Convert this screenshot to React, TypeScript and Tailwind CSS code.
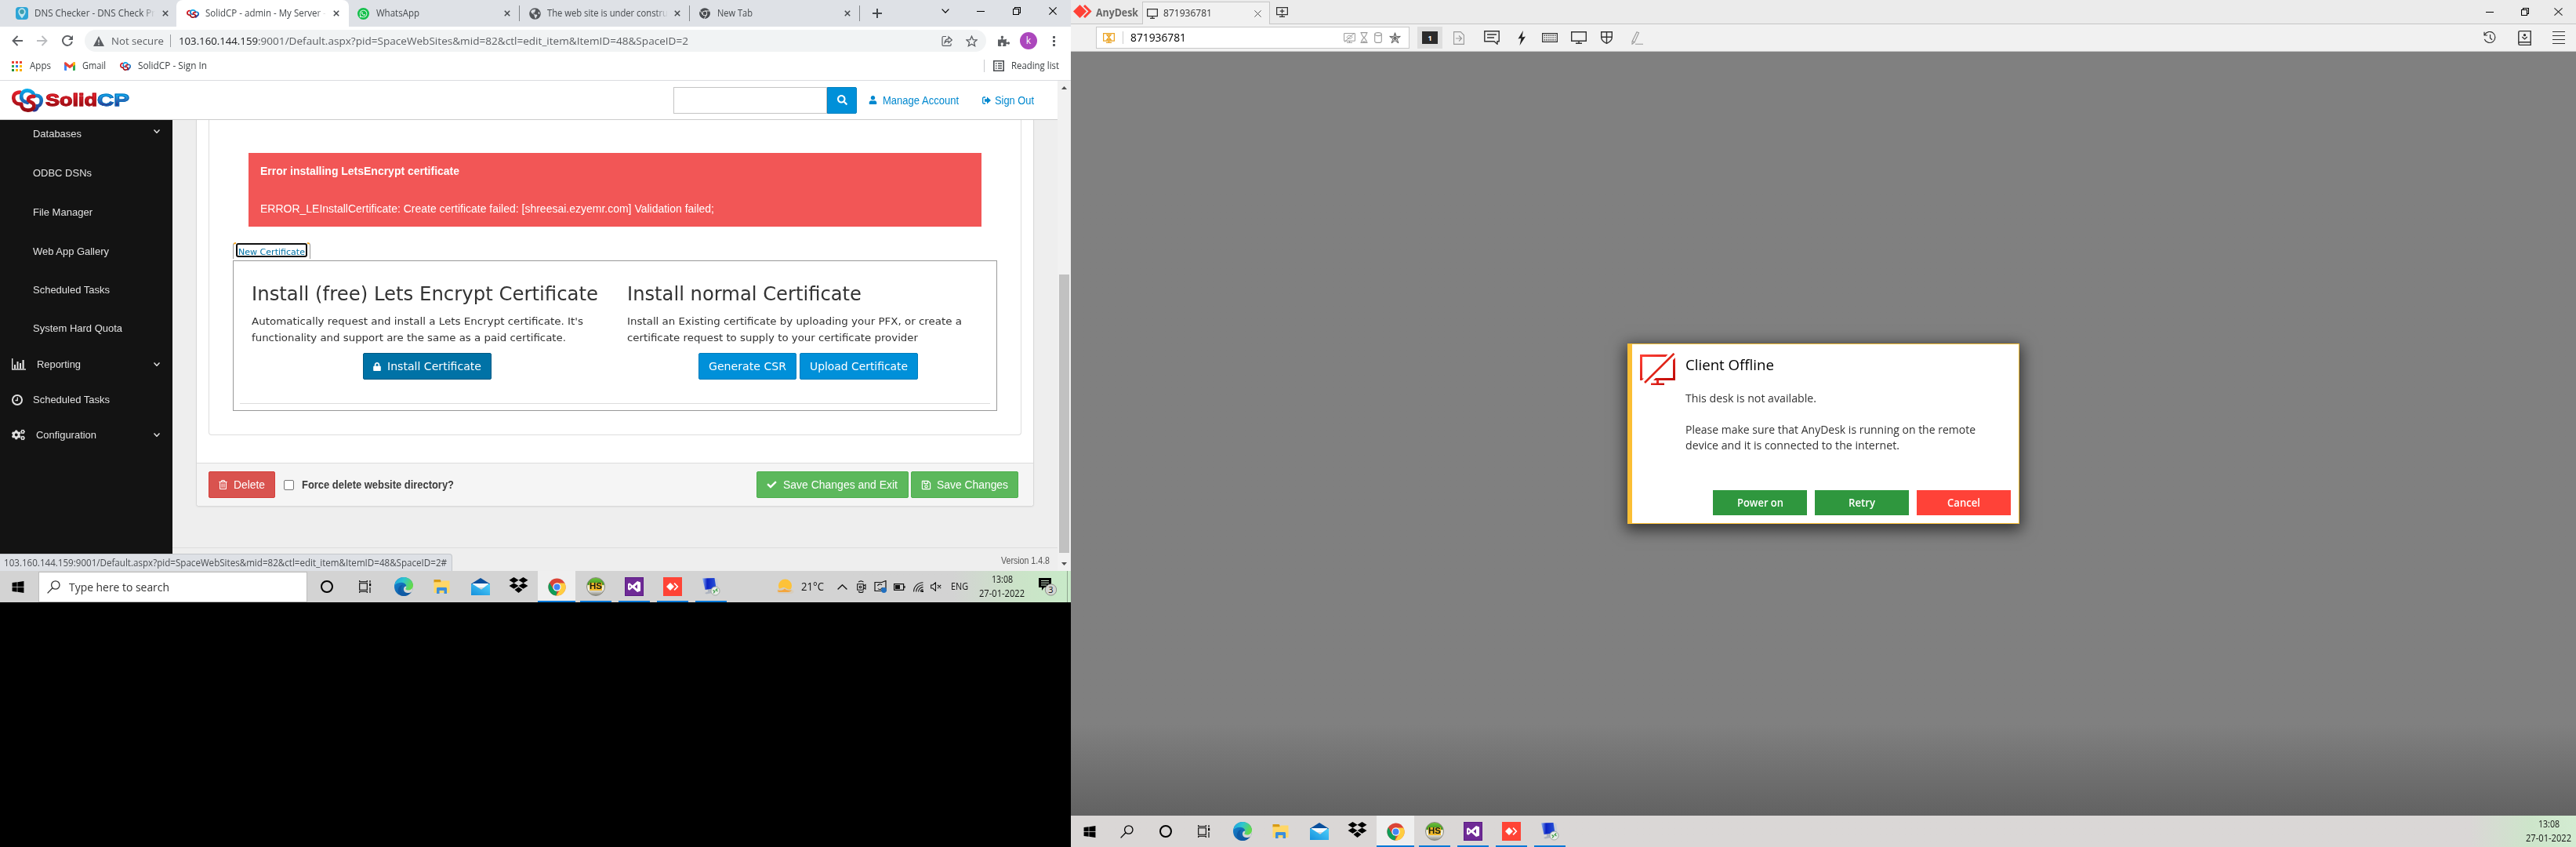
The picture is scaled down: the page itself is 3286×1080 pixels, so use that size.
import React, { useLayoutEffect, useRef, useState } from "react";
import {
  FaSearch,
  FaUser,
  FaLock,
  FaCheck,
  FaRegSave,
  FaCogs,
  FaRegTrashAlt,
  FaWhatsapp,
  FaGlobeAmericas,
  FaDropbox,
  FaWindows,
  FaPuzzlePiece,
} from "react-icons/fa";

const UI = "font-['Open_Sans','Noto_Sans',sans-serif]";
const ARIAL = "font-['Liberation_Sans',Arial,sans-serif]";
const VERDANA = "font-['DejaVu_Sans',Verdana,sans-serif]";

/* One line of text condensed or widened to fill the width of its box. */
function Fit({ className = "", inner = "", children }: { className?: string; inner?: string; children: React.ReactNode }) {
  const box = useRef<HTMLSpanElement>(null);
  const text = useRef<HTMLSpanElement>(null);
  const [k, setK] = useState(1);
  useLayoutEffect(() => {
    if (box.current && text.current && text.current.offsetWidth > 0) {
      setK(box.current.clientWidth / text.current.getBoundingClientRect().width);
    }
  }, []);
  return (
    <span ref={box} className={`block shrink-0 text-left whitespace-nowrap ${className}`}>
      <span ref={text} className={`inline-block origin-left ${inner}`} style={{ transform: `scaleX(${k})` }}>
        {children}
      </span>
    </span>
  );
}

type IconProps = { className: string; vb: string; children: React.ReactNode; sw?: number };
function Line({ className, vb, children, sw = 1.3 }: IconProps) {
  return (
    <svg className={`block shrink-0 ${className}`} viewBox={vb} fill="none" stroke="currentColor" strokeWidth={sw} preserveAspectRatio="none">
      {children}
    </svg>
  );
}

function Cross({ className }: { className: string }) {
  return (
    <Line className={className} vb="0 0 10 10" sw={1.9}>
      <path d="M1 1l8 8M9 1l-8 8" />
    </Line>
  );
}
function ThinCross({ className }: { className: string }) {
  return (
    <Line className={className} vb="0 0 10 10" sw={1.1}>
      <path d="M.4.4l9.2 9.2M9.6.4L.4 9.6" />
    </Line>
  );
}
function Restore({ className }: { className: string }) {
  return (
    <Line className={className} vb="0 0 10 10" sw={1.1}>
      <path d="M.5 2.500h7v7h-7zM2.500 2.500v-2h7v7h-2" />
    </Line>
  );
}
function Down({ className, sw = 1.2 }: { className: string; sw?: number }) {
  return (
    <Line className={className} vb="0 0 10 6" sw={sw}>
      <path d="M.6.6L5 5.2 9.4.6" />
    </Line>
  );
}

function Knot({ className }: { className: string }) {
  return (
    <svg className={`block shrink-0 ${className}`} viewBox="0 0 40 30" preserveAspectRatio="none" fill="none" strokeWidth="4.6" strokeLinecap="round">
      <defs>
        <linearGradient id="kr" gradientUnits="userSpaceOnUse" x1="0" y1="0" x2="0" y2="30">
          <stop offset="0" stopColor="#ee2430" />
          <stop offset="1" stopColor="#8f0a10" />
        </linearGradient>
        <linearGradient id="kb" gradientUnits="userSpaceOnUse" x1="0" y1="0" x2="0" y2="30">
          <stop offset="0" stopColor="#08b0f0" />
          <stop offset="1" stopColor="#2b2a86" />
        </linearGradient>
      </defs>
      <path stroke="url(#kr)" d="M10.500 4.600C3.500 4.600 2 9 2.300 12.500 2.600 17 6.500 20 10 19.500" />
      <path stroke="url(#kb)" d="M30 9C36 8 38 12.500 37.700 16c-.2 4-2.800 6-5 6.200.2 3-2.300 5.300-4.300 5" />
      <path stroke="url(#kb)" d="M12.500 12.500C11 7 14.500 2.400 20 2.400c5 0 8.500 3.500 8.300 7.600" />
      <path stroke="url(#kb)" d="M12.500 12.500c.8 3.500 4.500 4.500 7.500 5.300" />
      <path stroke="url(#kr)" d="M28.300 10c-4-.6-7.300 1-7.300 4 0 3 5.500 3 7 6 1.700 4-2 7.600-7.500 7.600-6 0-8.500-4-8.300-8.100" />
    </svg>
  );
}

function ChromeIcon({ className, mono = false }: { className: string; mono?: boolean }) {
  const c = mono ? ["#4a4d51", "#4a4d51", "#4a4d51", "#4a4d51"] : ["#db4437", "#0f9d58", "#ffcd40", "#4285f4"];
  return (
    <svg className={`block shrink-0 ${className}`} viewBox="0 0 48 48">
      <circle cx="24" cy="24" r="23" fill={c[0]} />
      <path fill={c[1]} d="M4.100 12.500L14 29.800 24 34l-2 13A23 23 0 0 1 4.100 12.500z" />
      <path fill={c[2]} d="M24 13.500h20.500A23 23 0 0 1 22 47l11-18z" />
      {mono && <path d="M24 13.500h20.500M33 29L22 47M14 29L4 12" stroke="#fff" strokeWidth="3" />}
      <circle cx="24" cy="24" r="10.800" fill="#fff" />
      <circle cx="24" cy="24" r="8.400" fill={c[3]} />
    </svg>
  );
}

function EdgeIcon() {
  return (
    <svg className="block h-6 w-6" viewBox="0 0 24 24">
      <defs>
        <linearGradient id="e1" x1="0" y1="0" x2="1" y2=".4">
          <stop offset="0" stopColor="#1b9de2" />
          <stop offset=".5" stopColor="#2fc6cf" />
          <stop offset="1" stopColor="#62d94e" />
        </linearGradient>
        <linearGradient id="e2" x1="0" y1="0" x2="1" y2="1">
          <stop offset="0" stopColor="#1588d8" />
          <stop offset="1" stopColor="#114a8b" />
        </linearGradient>
      </defs>
      <circle cx="12" cy="12" r="12" fill="url(#e2)" />
      <path fill="#d6d6d6" d="M24 10.500c.3 2.500-.2 5.500-1.500 7.700-2 1.800-4.300 2-6 1.800-3.500-.5-5-3-4.500-5.500.3-1.800 1.500-3 3-3z" />
      <path fill="url(#e1)" d="M.2 10.500C1 4.500 6 0 12 0c7.500 0 12 5.400 12 10.500 0 3.600-2.700 6-6 6-2.700 0-4-1-3.600-1.900.5-.9.900-1.500.900-2.700C15.300 9 12.500 6.800 8.800 6.800 4.500 6.800 1.300 8.600.2 10.500z" />
      <path fill="#0f5aa5" d="M8.700 15c0 4 3.700 6.500 7.500 6.200 1.800 0 3.300-.7 4.300-1.400C18.500 22.500 15.300 24 12 24c-4.700 0-7.500-4-7-8 .3-3.400 3-6.300 6-6.300-1.400 1-2.300 3-2.300 5.300z" />
    </svg>
  );
}
function FolderIcon() {
  return (
    <svg className="block h-[18px] w-[21px]" viewBox="0 0 21 18" preserveAspectRatio="none">
      <path fill="#d89b14" d="M.5 0h8l1 1.500V4H.5z" />
      <path fill="#ffd767" d="M.5 3.300h9L11 1.500h9.500V17H.5z" />
      <path fill="#3b8edb" d="M4 18v-6.500C4 10.500 4.700 10 5.500 10h10c.9 0 1.500.6 1.500 1.500V18h-3.500v-4h-6v4z" />
    </svg>
  );
}
function MailIcon() {
  return (
    <svg className="block h-[22px] w-6" viewBox="0 0 24 22" preserveAspectRatio="none">
      <defs>
        <linearGradient id="ml" x1="1" y1="0" x2="0" y2="1">
          <stop offset="0" stopColor="#4fd0fb" />
          <stop offset="1" stopColor="#1590dc" />
        </linearGradient>
      </defs>
      <path fill="#0a4f9c" d="M12 0l12 7.500V10H0V7.500z" />
      <path fill="#f4fafe" d="M2 7h20v5H2z" />
      <path fill="url(#ml)" d="M0 7.500l2 .3 11 7L22 7.800l2-.3V22H0z" />
    </svg>
  );
}
function HSIcon() {
  return (
    <span className="flex h-6 w-6 items-center justify-center rounded-full border border-[#8a8a80] bg-[linear-gradient(#6cc23a,#3f9420_38%,#e8e4c0_42%,#f4f4ee_66%,#8c8c84)]">
      <Fit className={`h-[10px] w-4 bg-[#f0b82a] text-[10px] leading-[10px] font-black text-[#141c10] ${ARIAL}`}>HS</Fit>
    </span>
  );
}
function VSIcon() {
  return (
    <span className="flex h-6 w-6 items-center justify-center border border-[#5b1b85] bg-[#6f2b96]">
      <svg className="block h-[14px] w-[16px]" viewBox="0 0 16 14">
        <path
          fill="#fff"
          fillRule="evenodd"
          d="M12 0l4 1.500v11L12 14 5.800 8.600 2 11.700 0 10.600V3.400L2 2.300l3.800 3.100zm0 4L8.500 7l3.500 3zM2 5v4l1.900-2z"
        />
      </svg>
    </span>
  );
}
function AnyDeskTile() {
  return (
    <span className="flex h-6 w-6 items-center justify-center bg-[#ff4436]">
      <svg className="block h-[10px] w-[16px]" viewBox="0 0 16 10">
        <path fill="#fff" d="M5 0l5 5-5 5-5-5z" />
        <path d="M10.100.7L14.300 5l-4.200 4.300" fill="none" stroke="#fff" strokeWidth="1.700" />
      </svg>
    </span>
  );
}
function RemoteIcon() {
  return (
    <svg className="block h-6 w-6" viewBox="0 0 24 24">
      <defs>
        <linearGradient id="rm" x1="0" y1="0" x2="1" y2="0">
          <stop offset="0" stopColor="#8fb6f4" />
          <stop offset=".35" stopColor="#0b22c4" />
          <stop offset="1" stopColor="#2a55d8" />
        </linearGradient>
      </defs>
      <path fill="#c9ced8" d="M16 1.500l4.500 1 1 12-5 1z" />
      <path fill="#aeb4c0" d="M8 14l5 0 1 4 2 1.500-10 2-2-1.500 4-1.500z" />
      <path fill="url(#rm)" d="M1 1.500l15.500-.5 2 13L4.500 16z" />
      <circle cx="17.500" cy="17.500" r="5.500" fill="#e8ece8" stroke="#8d968d" strokeWidth=".8" />
      <path d="M14.500 16.500l2.300 1.700-1.600 2.300M20.200 14.500l-2 2 2.400 1.500" fill="none" stroke="#3d9b45" strokeWidth="1.300" />
    </svg>
  );
}

function Magnifier() {
  return (
    <Line className="h-[17px] w-[17px]" vb="0 0 17 17" sw={1.3}>
      <circle cx="10.800" cy="6" r="5.200" />
      <path d="M7 9.800L.6 16.400" />
    </Line>
  );
}
function TaskView() {
  return (
    <Line className="h-4 w-4" vb="0 0 16 16" sw={1.1}>
      <path d="M.7 3.700h9.600v8.600H.7zM.7 0v1.800h9.600V0M.7 16v-1.800h9.600V16M14 0v3M14 9v7" />
      <path d="M13 4h2.200v3.200H13z" fill="currentColor" stroke="none" />
    </Line>
  );
}

function Cell({ children }: { children: React.ReactNode }) {
  return <div className="flex h-10 w-[49px] shrink-0 items-center justify-center">{children}</div>;
}
function RunCell({ children }: { children: React.ReactNode }) {
  return (
    <div className="flex h-10 w-[49px] shrink-0 flex-col items-center">
      <div className="flex h-[38px] items-center pt-0.5">{children}</div>
      <div className="h-0.5 w-10 bg-[#0078d7]" />
    </div>
  );
}

function TaskIcons() {
  return (
    <div className="flex text-black">
      <Cell>
        <span className="block h-4 w-4 rounded-full border-2 border-black" />
      </Cell>
      <Cell><TaskView /></Cell>
      <Cell><EdgeIcon /></Cell>
      <Cell><FolderIcon /></Cell>
      <Cell><MailIcon /></Cell>
      <Cell>
        <svg className="mb-1 block h-5 w-[25px]" viewBox="0 0 25 20" preserveAspectRatio="none">
          <path d="M6.500 0l6 3.700-6 3.700-6-3.700zM18.500 0l6 3.700-6 3.700-6-3.700zM6.500 7.400l6 3.700-6 3.700-6-3.700zM18.500 7.400l6 3.700-6 3.700-6-3.700zM12.500 12.500l5 3.500-5 4-5-4z" fill="#000" />
        </svg>
      </Cell>
      <div className="flex h-10 w-12 shrink-0 flex-col items-center bg-[#efefef]">
        <div className="flex h-[38px] items-center pt-0.5"><ChromeIcon className="h-[23px] w-[23px]" /></div>
        <div className="h-0.5 w-12 bg-[#0078d7]" />
      </div>
      <div className="w-px" />
      <RunCell><HSIcon /></RunCell>
      <RunCell><VSIcon /></RunCell>
      <RunCell><AnyDeskTile /></RunCell>
      <RunCell><RemoteIcon /></RunCell>
    </div>
  );
}

function Clock() {
  return (
    <div className={`flex w-[58px] shrink-0 flex-col items-center text-[12px] leading-[18px] text-[#111] ${UI}`}>
      <Fit className="w-[27px]">13:08</Fit>
      <Fit className="w-[58px]">27-01-2022</Fit>
    </div>
  );
}

function TabStrip() {
  return (
    <div className={`flex h-[34px] items-center bg-[#dee1e6] pl-5 text-[12px] leading-4 text-[#45494d] ${UI}`}>
      <span className="flex h-4 w-4 shrink-0 items-center justify-center rounded-sm bg-[#2ea5d6]">
        <svg className="h-[14px] w-3" viewBox="0 0 12 14">
          <path d="M6 13.500C3 9.500 1.300 7.500 1.300 5a4.700 4.700 0 0 1 9.400 0c0 2.500-1.700 4.500-4.700 8.500z" fill="#bfe6f0" />
          <circle cx="6" cy="5" r="2.900" fill="#3f9fae" />
        </svg>
      </span>
      <Fit className="ml-2 w-[154px] [mask-image:linear-gradient(to_right,black_90%,transparent)]">DNS Checker - DNS Check Pr</Fit>
      <Cross className="ml-[9px] h-2 w-2" />
      <div className="ml-[10px] flex h-[34px] w-[220px] shrink-0 items-center rounded-t-lg bg-white pl-[13px]">
        <Knot className="h-[11px] w-4" />
        <Fit className="ml-2 w-[154px] [mask-image:linear-gradient(to_right,black_92%,transparent)]">SolidCP - admin - My Server -</Fit>
        <Cross className="ml-[9px] h-2 w-2" />
      </div>
      <span className="ml-[11px] flex h-[15px] w-[15px] shrink-0 items-center justify-center rounded-full bg-[#14bf4b] text-white">
        <FaWhatsapp className="h-[11px] w-[11px]" />
      </span>
      <Fit className="ml-[9px] w-[55px]">WhatsApp</Fit>
      <Cross className="ml-[108px] h-2 w-2" />
      <span className="ml-[11px] h-5 w-px bg-[#808488]" />
      <FaGlobeAmericas className="ml-3 h-[15px] w-[15px] shrink-0 text-[#54575b]" />
      <Fit className="ml-2 w-[154px] [mask-image:linear-gradient(to_right,black_90%,transparent)]">The web site is under constru</Fit>
      <Cross className="ml-2 h-2 w-2" />
      <span className="ml-[11px] h-5 w-px bg-[#808488]" />
      <ChromeIcon mono className="ml-3 h-[14px] w-[14px]" />
      <Fit className="ml-[9px] w-[45px]">New Tab</Fit>
      <Cross className="ml-[117px] h-2 w-2" />
      <span className="ml-[11px] h-5 w-px bg-[#808488]" />
      <Line className="ml-4 h-3 w-3" vb="0 0 12 12" sw={2}>
        <path d="M6 0v12M0 6h12" />
      </Line>
      <div className="mb-[6px] ml-[76px] flex items-center text-black">
        <Down className="h-[6px] w-[10px]" />
        <span className="ml-[35px] h-px w-[10px] bg-black" />
        <Restore className="ml-9 h-[10px] w-[10px]" />
        <ThinCross className="ml-9 h-[10px] w-[10px]" />
      </div>
    </div>
  );
}

function AddressBar() {
  return (
    <div className={`flex h-9 items-center bg-white pl-[15px] text-[#5c5f63] ${UI}`}>
      <Line className="h-[14px] w-[14px]" vb="0 0 14 14" sw={1.8}>
        <path d="M14 7H1.500M7.500 1l-6 6 6 6" />
      </Line>
      <Line className="ml-[18px] h-[14px] w-[14px] text-[#b9bbbe]" vb="0 0 14 14" sw={1.8}>
        <path d="M0 7h12.500M6.500 1l6 6-6 6" />
      </Line>
      <Line className="ml-[18px] h-[14px] w-[14px]" vb="0 0 14 14" sw={1.9}>
        <path d="M11.800 3.300A6 6 0 1 0 12.900 8" />
        <path d="M14 0v6H8z" fill="currentColor" stroke="none" />
      </Line>
      <div className="ml-[15px] flex h-7 w-[1150px] shrink-0 items-center rounded-full bg-[#f1f3f4] pl-[11px] text-[13.5px] leading-5">
        <svg className="h-[13px] w-[14px] shrink-0" viewBox="0 0 14 13">
          <path d="M7 0l7 13H0z" fill="#5c5f63" />
          <path d="M7 4.500v4M7 9.700v1.500" stroke="#f1f3f4" strokeWidth="1.400" />
        </svg>
        <Fit className="ml-[9px] w-[67px]">Not secure</Fit>
        <span className="ml-2 h-4 w-px bg-[#9a9da1]" />
        <Fit className="ml-[10px] w-[101px] text-[#202124]">103.160.144.159</Fit>
        <Fit className="w-[549px]">:9001/Default.aspx?pid=SpaceWebSites&amp;mid=82&amp;ctl=edit_item&amp;ItemID=48&amp;SpaceID=2</Fit>
        <Line className="ml-[323px] h-[14px] w-[14px]" vb="0 0 14 14" sw={1.2}>
          <path d="M6 1.500H2.500C1.500 1.500 1 2 1 3v9c0 .8.500 1.300 1.300 1.300h8.500c.8 0 1.300-.5 1.300-1.300v-1.500" />
          <path d="M4 9.500C4.500 6 6.500 4.800 9 4.600V2l4.300 4L9 9.700V7.400C7 7.300 5.300 8 4 9.500z" />
        </Line>
        <Line className="ml-[17px] h-[15px] w-[15px]" vb="0 0 16 16" sw={1.4}>
          <path d="M8 1.300l2 4.600 5 .4-3.800 3.300 1.200 4.900L8 11.900l-4.400 2.600 1.200-4.900L1 6.300l5-.4z" />
        </Line>
      </div>
      <FaPuzzlePiece className="ml-[15px] h-[15px] w-[15px] shrink-0" />
      <span className="ml-[13px] flex h-[22px] w-[22px] shrink-0 items-center justify-center rounded-full bg-[#ab47bc] text-[12px] leading-none text-white">k</span>
      <svg className="ml-5 h-[13px] w-[3px] shrink-0" viewBox="0 0 3 13">
        <path d="M0 0h3v3H0zM0 5h3v3H0zM0 10h3v3H0z" fill="#5c5f63" />
      </svg>
    </div>
  );
}

function Bookmarks() {
  return (
    <div className={`flex h-[33px] items-center border-b border-[#dadce0] bg-white pb-1 pl-[15px] text-[12px] leading-4 text-[#3c4043] ${UI}`}>
      <div className="grid shrink-0 grid-cols-3 gap-x-[2px] gap-y-[2px]">
        {["bg-[#ea4335]", "bg-[#ea4335]", "bg-[#ea4335]", "bg-[#34a853]", "bg-[#2f7de9]", "bg-[#fbbc04]", "bg-[#1e8e3e]", "bg-[#fbbc04]", "bg-[#f9ab00]"].map((c, i) => (
          <span key={i} className={`h-[3px] w-[3px] ${c}`} />
        ))}
      </div>
      <Fit className="ml-[10px] w-[27px]">Apps</Fit>
      <svg className="ml-[17px] h-[11px] w-[14px] shrink-0" viewBox="0 0 14 11">
        <path fill="#4285f4" d="M0 1.500l3 2V11H1a1 1 0 0 1-1-1z" />
        <path fill="#34a853" d="M14 1.500l-3 2V11h2a1 1 0 0 0 1-1z" />
        <path fill="#ea4335" d="M0 1.500C0 .3 1.300-.3 2.300.5L7 4.200 11.700.5c1-.8 2.300-.2 2.300 1l-1 2.500-6 4.300L1 4z" />
        <path fill="#fbbc04" d="M11 1l.7-.5c1-.8 2.300-.2 2.300 1v2l-3 2z" />
      </svg>
      <Fit className="ml-[9px] w-[30px]">Gmail</Fit>
      <Knot className="ml-[18px] h-[11px] w-[14px]" />
      <Fit className="ml-[9px] w-[88px]">SolidCP - Sign In</Fit>
      <span className="ml-[991px] h-4 w-px bg-[#c8cacd]" />
      <Line className="ml-[11px] h-[14px] w-[14px] text-[#4a4d51]" vb="0 0 14 14" sw={1.6}>
        <path d="M.8.800h12.400v12.400H.8zM3 4h1.500M6 4h5M3 7h1.500M6 7h5M3 10h1.500M6 10h5" />
      </Line>
      <Fit className="ml-[9px] w-[61px]">Reading list</Fit>
    </div>
  );
}

function SiteHeader() {
  return (
    <header className={`flex h-[50px] items-center border-b border-[#ccc] bg-white pl-[15px] text-[14px] leading-5 text-[#0088cf] ${ARIAL}`}>
      <Knot className="h-[30px] w-10" />
      <Fit className="ml-[3px] w-[66px] text-[22px] leading-[24px] font-bold" inner="bg-linear-to-b from-[#ee2430] from-20% to-[#8f0a10] to-80% bg-clip-text text-transparent [-webkit-text-stroke:1px_#b3141c]">Solid</Fit>
      <Fit className="w-[41px] text-[22px] leading-[24px] font-bold" inner="bg-linear-to-b from-[#08b0f0] from-20% to-[#2b2a86] to-80% bg-clip-text text-transparent [-webkit-text-stroke:1px_#0a6fbd]">CP</Fit>
      <div className="ml-[694px] h-[34px] w-[196px] shrink-0 border border-[#c4c4c4] bg-white" />
      <div className="flex h-[34px] w-[38px] shrink-0 items-center justify-center rounded-r-[2px] border border-[#0080bf] bg-[#0090d9] text-white">
        <FaSearch className="h-[13px] w-[13px]" />
      </div>
      <FaUser className="ml-[15px] h-[11px] w-[11px] shrink-0" />
      <Fit className="ml-[7px] w-[97px]">Manage Account</Fit>
      <svg className="ml-[30px] h-[10px] w-[11px] shrink-0" viewBox="0 0 11 10">
        <path d="M4 1H2C1.200 1 .7 1.500.7 2.300v5.400C.7 8.500 1.200 9 2 9h2" fill="none" stroke="#0088cf" strokeWidth="1.300" />
        <path d="M6 .6L11 5 6 9.400V6.800H3V3.200h3z" fill="#0088cf" />
      </svg>
      <Fit className="ml-[5px] w-[50px]">Sign Out</Fit>
    </header>
  );
}

function SideItem({ w, h, label, arrow }: { w: string; h: string; label: string; arrow?: boolean }) {
  return (
    <div className={`flex items-center pl-[42px] ${h}`}>
      <Fit className={w}>{label}</Fit>
      {arrow && <Down className="mr-4 mb-[8px] ml-auto h-[5px] w-2" sw={1.8} />}
    </div>
  );
}

function Sidebar() {
  return (
    <nav className={`h-[575px] w-[220px] shrink-0 bg-[#131313] pt-px text-[13px] leading-4 text-[#e0e0e0] ${ARIAL}`}>
      <SideItem h="h-[34px]" w="w-[62px]" label="Databases" arrow />
      <div className="h-2" />
      <SideItem h="h-[50px]" w="w-[75px]" label="ODBC DSNs" />
      <SideItem h="h-[50px]" w="w-[76px]" label="File Manager" />
      <SideItem h="h-[49px]" w="w-[97px]" label="Web App Gallery" />
      <SideItem h="h-[50px]" w="w-[98px]" label="Scheduled Tasks" />
      <SideItem h="h-[47px]" w="w-[114px]" label="System Hard Quota" />
      <div className="flex h-[45px] items-center pl-[15px]">
        <svg className="h-[15px] w-[18px] shrink-0" viewBox="0 0 18 15">
          <path d="M.7 0v14H18" fill="none" stroke="#e0e0e0" strokeWidth="1.400" />
          <path d="M3 8h2v5H3zM6.500 4h2v9h-2zM10 6h2v7h-2zM13.500 2h2.200v11h-2.200z" fill="#e0e0e0" />
        </svg>
        <Fit className="ml-[14px] w-[56px]">Reporting</Fit>
        <Down className="mr-4 ml-auto h-[5px] w-2" sw={1.8} />
      </div>
      <div className="flex h-[45px] items-center pl-[15px]">
        <Line className="h-[14px] w-[14px]" vb="0 0 14 14" sw={2}>
          <circle cx="7" cy="7" r="6" />
          <path d="M7.300 3.500v4H4.500" strokeWidth="1.300" />
        </Line>
        <Fit className="ml-[13px] w-[98px]">Scheduled Tasks</Fit>
      </div>
      <div className="flex h-[45px] items-center pl-[15px]">
        <FaCogs className="h-[17px] w-[17px] shrink-0" />
        <Fit className="ml-[14px] w-[77px]">Configuration</Fit>
        <Down className="mr-4 ml-auto h-[5px] w-2" sw={1.8} />
      </div>
    </nav>
  );
}

function CertificateBox() {
  const blue = "flex h-[34px] shrink-0 items-center rounded-[2px] border border-[#007dbd] bg-[#0090d9] pl-3";
  return (
    <div className={`ml-[30px] h-[192px] w-[975px] border border-[#999] pt-[27px] text-[#333] ${VERDANA}`}>
      <div className="flex pl-[23px]">
        <div className="w-[479px] shrink-0">
          <Fit className="h-[30px] w-[442px] text-[24px] leading-[30px]">Install (free) Lets Encrypt Certificate</Fit>
          <div className="mt-[9px] text-[12.5px] leading-[21px]">
            <Fit className="h-[21px] w-[423px]">Automatically request and install a Lets Encrypt certificate. It's</Fit>
            <Fit className="h-[21px] w-[401px]">functionality and support are the same as a paid certificate.</Fit>
          </div>
          <div className="mt-[9px] ml-[142px] flex h-[34px] w-[164px] items-center rounded-[2px] border border-[#005a84] bg-[#0072a6] pl-3 text-[13.5px] leading-5 text-white">
            <FaLock className="h-[11px] w-[10px] shrink-0" />
            <Fit className="ml-2 w-[120px]">Install Certificate</Fit>
          </div>
        </div>
        <div>
          <Fit className="h-[30px] w-[299px] text-[24px] leading-[30px]">Install normal Certificate</Fit>
          <div className="mt-[9px] text-[12.5px] leading-[21px]">
            <Fit className="h-[21px] w-[427px]">Install an Existing certificate by uploading your PFX, or create a</Fit>
            <Fit className="h-[21px] w-[371px]">certificate request to supply to your certificate provider</Fit>
          </div>
          <div className="mt-[9px] ml-[91px] flex gap-1 text-[13.5px] leading-5 text-white">
            <div className={`w-[125px] ${blue}`}>
              <Fit className="w-[99px]">Generate CSR</Fit>
            </div>
            <div className={`w-[151px] ${blue}`}>
              <Fit className="w-[125px]">Upload Certificate</Fit>
            </div>
          </div>
        </div>
      </div>
      <div className="mx-2 mt-[30px] h-px bg-[#ddd]" />
    </div>
  );
}

function Content() {
  const green = "flex h-[34px] shrink-0 items-center rounded-[2px] border border-[#4cae4c] bg-[#5cb85c] pl-3 text-white";
  return (
    <main className={`flex w-[1129px] flex-col bg-[#eee] pl-[30px] ${ARIAL}`}>
      <section className="w-[1069px] rounded-b border-x border-b border-[#d8d8d8] bg-white shadow-xs">
        <div className="h-[437px] px-[15px]">
          <div className="h-[402px] w-[1037px] rounded-b border-x border-b border-[#ddd] pt-[42px]">
            <div className="ml-[50px] h-[94px] w-[935px] bg-[#f25656] pt-[13px] pl-[15px] text-[14px] leading-5 text-white">
              <Fit className="h-5 w-[254px] font-bold">Error installing LetsEncrypt certificate</Fit>
              <Fit className="mt-7 h-5 w-[579px]">ERROR_LEInstallCertificate: Create certificate failed: [shreesai.ezyemr.com] Validation failed;</Fit>
            </div>
            <div className="mt-5 mb-0.5 ml-[30px] flex h-[21px] w-[99px] justify-between bg-white">
              <span className="w-1 rounded-tl-[4px] border-t-2 border-l border-t-[#f5a623] border-l-[#999]" />
              <div className="mt-px flex h-[18px] w-[91px] items-end overflow-hidden rounded-[3px] border-2 border-[#101010] pl-px">
                <Fit className={`w-[85px] text-[11px] leading-[9px] text-[#0072a6] underline ${VERDANA}`}>New Certificate</Fit>
              </div>
              <span className="w-1 rounded-tr-[4px] border-t-2 border-r border-t-[#f5a623] border-r-[#999]" />
            </div>
            <CertificateBox />
          </div>
        </div>
        <div className="flex h-[55px] items-center rounded-b border-t border-[#ddd] bg-[#f5f5f5] pl-[15px] text-[14px] leading-5">
          <div className="flex h-[34px] w-[85px] shrink-0 items-center rounded-[2px] border border-[#d43f3a] bg-[#d9534f] pl-3 text-white">
            <FaRegTrashAlt className="h-[12px] w-[11px] shrink-0" />
            <Fit className="ml-2 w-10">Delete</Fit>
          </div>
          <span className="ml-[11px] h-[13px] w-[13px] shrink-0 rounded-xs border border-[#767676] bg-white" />
          <Fit className="ml-[10px] w-[194px] text-[14px] font-bold text-[#3c3c3c]">Force delete website directory?</Fit>
          <div className={`ml-[386px] w-[194px] ${green}`}>
            <FaCheck className="h-[12px] w-[13px] shrink-0" />
            <Fit className="ml-2 w-[146px]">Save Changes and Exit</Fit>
          </div>
          <div className={`ml-[3px] w-[137px] ${green}`}>
            <FaRegSave className="h-[13px] w-[13px] shrink-0" />
            <Fit className="ml-[7px] w-[91px]">Save Changes</Fit>
          </div>
        </div>
      </section>
      <div className="mt-[52px] -ml-[30px] h-px bg-[#ddd]" />
      <div className="flex justify-end pt-2 pr-[10px] text-[12px] leading-4 text-[#555]">
        <Fit className="w-[62px]">Version 1.4.8</Fit>
      </div>
    </main>
  );
}

function Scrollbar() {
  return (
    <div className="flex h-[625px] w-[17px] shrink-0 flex-col items-center bg-[#f1f1f1] pr-px">
      <svg className="mt-[7px] h-[4px] w-[7px]" viewBox="0 0 8 4" preserveAspectRatio="none">
        <path d="M0 4h8L4 0z" fill="#505050" />
      </svg>
      <div className="mt-[236px] h-[355px] w-[13px] bg-[#c1c1c1]" />
      <svg className="mt-[12px] h-[4px] w-[7px]" viewBox="0 0 8 4" preserveAspectRatio="none">
        <path d="M0 0h8L4 4z" fill="#505050" />
      </svg>
    </div>
  );
}

function LeftTaskbar() {
  return (
    <div className={`flex h-10 items-center bg-linear-to-r from-[#d3d3d3] from-89% via-[#cbe3c8] via-95% to-[#c8eac8] text-[#111] ${UI}`}>
      <FaWindows className="ml-[15px] h-[17px] w-4 shrink-0 text-black" />
      <div className="ml-[18px] flex h-[39px] w-[343px] shrink-0 items-center border border-[#bdbdbd] bg-white pl-[10px] text-[15px] leading-5 text-[#333]">
        <Magnifier />
        <Fit className="ml-[11px] w-[128px]">Type here to search</Fit>
      </div>
      <TaskIcons />
      <svg className="ml-[60px] h-[21px] w-[22px] shrink-0" viewBox="0 0 22 21">
        <circle cx="10.500" cy="9" r="8.500" fill="#fdc238" />
        <path d="M3 19a3.300 3.300 0 0 1 0-6.500c3 0 4-2 7-1.200 3 .8 3 2.700 6 2.200 3 0 5.500.5 5.500 2.700S19 19 17 19z" fill="#d6cdbd" />
        <path d="M1 14.500c3 .5 7 .5 9-2 2 2.200 5 2.600 9 2-1 1.500-2.500 2.500-5 2.500H3c-1.500 0-2-1-2-2.500z" fill="#f3a53c" />
      </svg>
      <Fit className="ml-[9px] w-[29px] text-[14px] leading-5">21°C</Fit>
      <Line className="ml-[17px] h-[7px] w-[13px]" vb="0 0 13 7" sw={1.4}>
        <path d="M.6 6.500l5.900-5.700 5.900 5.700" />
      </Line>
      <Line className="ml-3 h-4 w-3" vb="0 0 12 16" sw={1.1}>
        <path d="M.7 4.700h7.600v7.600H.7zM8.500 7l2.500-1.500v5.500L8.500 9.500M2 2.200C4 .5 6.500.5 8.500 2.200M2 14.200c2 1.600 4.500 1.600 6.500 0" />
        <circle cx="4.500" cy="8.500" r="1.300" />
      </Line>
      <svg className="ml-[10px] h-4 w-4 shrink-0" viewBox="0 0 16 16">
        <path d="M1 2.500h9l5-2v13H1z" fill="none" stroke="#111" strokeWidth="1.200" />
        <path d="M4.500 7A3.200 3.200 0 0 1 10 6M10.500 9A3.200 3.200 0 0 1 5 10.500" fill="none" stroke="#111" strokeWidth="1.100" />
        <circle cx="12.500" cy="12.500" r="3.400" fill="#2170c0" />
      </svg>
      <svg className="ml-[9px] h-[9px] w-[15px] shrink-0" viewBox="0 0 15 9">
        <path d="M.6.6h12v7.800H.6zM14 3v3" fill="none" stroke="#111" strokeWidth="1.200" />
        <path d="M2 2h6v5H2z" fill="#111" />
      </svg>
      <Line className="ml-[10px] h-[13px] w-[13px]" vb="0 0 13 13" sw={1.1}>
        <path d="M.6 12.500C.6 6 6 .8 12.500.8M3.600 12.500c0-4.800 4-8.800 8.900-8.800M6.600 12.500c0-3.200 2.700-5.900 5.900-5.900M9.400 12.500c0-1.700 1.400-3 3.100-3" />
        <circle cx="11.700" cy="12" r="1" fill="currentColor" />
      </Line>
      <Line className="ml-[9px] h-3 w-[14px]" vb="0 0 14 12" sw={1.1}>
        <path d="M.6 4h2.200l3.700-3.200v10.600L2.800 8H.6zM9 4l4.200 4.200M13.200 4L9 8.200" />
      </Line>
      <Fit className="ml-3 w-[22px] text-[12.5px] leading-5">ENG</Fit>
      <div className="ml-[14px]">
        <Clock />
      </div>
      <svg className="ml-[18px] h-6 w-[23px] shrink-0" viewBox="0 0 23 24">
        <path d="M0 1h16v12H7l-3 4v-4H0z" fill="#000" />
        <path d="M3 4.500h10M3 7.200h10M3 10h7" stroke="#cfe6cc" strokeWidth="1" />
        <circle cx="15.500" cy="16" r="7.200" fill="#d3d6d1" stroke="#8b8f8a" />
        <text x="15.500" y="20" fontSize="11" textAnchor="middle" fill="#111" fontFamily="Open Sans, sans-serif">3</text>
      </svg>
      <span className="ml-[13px] h-10 w-px bg-[#8fa58e]" />
    </div>
  );
}

function LeftScreen() {
  return (
    <div className="flex h-[1080px] w-[1366px] shrink-0 flex-col bg-black">
      <TabStrip />
      <AddressBar />
      <Bookmarks />
      <div className="relative flex h-[625px] overflow-hidden bg-white">
        <div className="w-[1349px] shrink-0">
          <SiteHeader />
          <div className="flex">
            <Sidebar />
            <Content />
          </div>
        </div>
        <Scrollbar />
        <div className={`absolute bottom-0 left-0 flex h-[22px] w-[577px] items-center rounded-tr-[4px] border-t border-r border-[#c4c7cb] bg-[#dee1e6] pl-[5px] text-[12px] leading-4 text-[#4a4d51] ${UI}`}>
          <Fit className="w-[565px]">103.160.144.159:9001/Default.aspx?pid=SpaceWebSites&amp;mid=82&amp;ctl=edit_item&amp;ItemID=48&amp;SpaceID=2#</Fit>
        </div>
      </div>
      <LeftTaskbar />
    </div>
  );
}

function AnyDeskTabs() {
  return (
    <div className={`flex h-[31px] border-b border-[#c6c6c6] bg-[#ebebeb] text-[#333] ${UI}`}>
      <svg className="mt-[6px] ml-[3px] h-[17px] w-6 shrink-0" viewBox="0 0 24 17" preserveAspectRatio="none">
        <path d="M8.500 0L17 8.500 8.500 17 0 8.500z" fill="#ff4136" />
        <path d="M14 1l7.500 7.500L14 16" fill="none" stroke="#ff4136" strokeWidth="3" />
      </svg>
      <Fit className="mt-[6px] ml-[5px] w-[54px] text-[14px] leading-5 font-bold text-[#666]">AnyDesk</Fit>
      <div className="mt-0.5 -mb-px ml-[5px] flex h-[29px] w-[163px] shrink-0 items-center border-x border-t border-[#c6c6c6] bg-[#f1f1f1] pl-[5px]">
        <Line className="h-[13px] w-[14px]" vb="0 0 14 13" sw={1.3}>
          <path d="M.6.6h12.800v9H.6zM7 9.600v3M4 12.400h6" />
        </Line>
        <Fit className="ml-[7px] w-[62px] text-[12.5px] leading-5">871936781</Fit>
        <ThinCross className="ml-[54px] h-[9px] w-[9px] text-[#555]" />
      </div>
      <Line className="mt-[9px] ml-2 h-[13px] w-[15px]" vb="0 0 15 13" sw={1.3}>
        <path d="M.6.6h13.800v9H.6zM7.500 9.600v3M4 12.400h7M7.500 2.500v5.400M4.700 5.200h5.600" />
      </Line>
      <div className="mr-[17px] ml-auto flex h-[30px] items-center text-black">
        <span className="h-px w-[10px] bg-black" />
        <Restore className="ml-[35px] h-[10px] w-[10px]" />
        <ThinCross className="ml-8 h-[10px] w-[11px] text-[#333]" />
      </div>
    </div>
  );
}

function AnyDeskToolbar() {
  return (
    <div className={`flex h-[35px] items-center border-b border-[#c6c6c6] bg-[#f1f1f1] text-[#333] ${UI}`}>
      <div className="ml-8 flex h-7 w-[400px] shrink-0 items-center border border-[#c8c8c8] bg-white pl-2 text-[#999]">
        <Line className="h-[13px] w-[15px] text-[#eba322]" vb="0 0 15 13" sw={1.3}>
          <path d="M.6.6h13.800v9.600H.6zM7.500 10v2.500M4 12.300h7M5 2.500h5L5 8.500h5z" />
        </Line>
        <span className="ml-[10px] h-4 w-px bg-[#ccc]" />
        <Fit className="ml-[9px] w-[71px] text-[14.5px] leading-5 text-black">871936781</Fit>
        <Line className="ml-[201px] h-[13px] w-[15px]" vb="0 0 15 13" sw={1}>
          <path d="M.6.6h13.800v9.600H.6zM7.500 10v2.500M4 12.300h7M1 11.500L13.500.3M4 5.500c2-3 5-3 7 0-2 2.500-5 2.500-7 0z" />
        </Line>
        <Line className="ml-[6px] h-[14px] w-[10px]" vb="0 0 10 14" sw={1.1}>
          <path d="M.5.6h9M.5 13.400h9M1.500.6c0 4 3 4.500 3 6.400s-3 2.400-3 6.400M8.500.6c0 4-3 4.500-3 6.400s3 2.400 3 6.400M3 12h4" />
        </Line>
        <Line className="ml-2 h-[14px] w-[10px]" vb="0 0 10 14" sw={1.1}>
          <ellipse cx="5" cy="2.600" rx="4.300" ry="2" />
          <path d="M.7 2.600v8.800c0 1 2 2 4.300 2s4.300-1 4.300-2V2.600" />
        </Line>
        <Line className="ml-[9px] h-[15px] w-[15px] text-[#555]" vb="0 0 16 16" sw={0.9}>
          <path d="M8 .8l1.900 5h5.300L11 9.200l1.600 5.600L8 11.500l-4.600 3.300L5 9.200.8 5.800h5.300zM8 .8v10.700M.8 5.800L11 9.200M15.200 5.800L5 9.200M3.400 14.800L9.900 5.800M12.600 14.800L6.100 5.800" />
        </Line>
      </div>
      <div className="ml-[10px] flex h-7 w-8 shrink-0 items-center justify-center bg-[#dedede]">
        <span className="flex h-4 w-5 items-center justify-center bg-[#2b2b2b] text-[9px] leading-none font-bold text-white">1</span>
      </div>
      <Line className="ml-[14px] h-[17px] w-[14px] text-[#999]" vb="0 0 14 17" sw={1.1}>
        <path d="M.6.6h8.600l4.200 4.200v11.600H.6zM3 9h7.500M7 5.500L10.500 9 7 12.500" />
      </Line>
      <Line className="ml-[25px] h-[18px] w-5" vb="0 0 20 18" sw={1.4}>
        <path d="M.8.8h18.400v13H17v3.400l-4-3.400H.8zM4 5h12M4 9h9" />
      </Line>
      <svg className="ml-[23px] block h-[19px] w-[10px] shrink-0" viewBox="0 0 10 19">
        <path d="M7 0L.5 10.500l4-.8L2.500 19 10 7.500l-4.500 1z" fill="#222" />
      </svg>
      <Line className="ml-[21px] h-3 w-5" vb="0 0 20 12" sw={1.2}>
        <path d="M.6.6h18.800v10.800H.6z" />
        <path d="M2.500 3.200h15M2.500 6h15M2.500 8.900h15" strokeDasharray="1.700 1" />
      </Line>
      <Line className="ml-[17px] h-4 w-5" vb="0 0 20 16" sw={1.4}>
        <path d="M.7.7h18.600v11.600H.7zM10 12.300v3M6 15.300h8" />
      </Line>
      <Line className="ml-[18px] h-4 w-[15px]" vb="0 0 15 16" sw={1.4}>
        <path d="M.7.7h13.600v6.500c0 4-3 6.500-6.800 8.100C3.700 13.700.7 11.200.7 7.200zM7.500.7v14.600M.7 7.200h13.600" />
      </Line>
      <Line className="ml-6 h-[17px] w-[15px] text-[#999]" vb="0 0 15 17" sw={1.1}>
        <path d="M7 .8l2.500 1L4 14l-3 2.300V13zM5 16.300h10M1.500 12.500L4 14" />
      </Line>
      <div className="mr-[14px] ml-auto flex h-full items-center">
        <Line className="h-4 w-4" vb="0 0 16 16" sw={1.2}>
          <path d="M1.500 4.500A7 7 0 1 1 1.300 10M1 .8v4.200h4M8.500 4v4.500l2.500 2.200" />
        </Line>
        <Line className="ml-7 h-[19px] w-[17px]" vb="0 0 17 20" sw={1.4}>
          <path d="M.8 2.500C.8 1.300 1.500.7 2.500.7h13.700v18.600H2.500C1.500 19.300.8 18.700.8 17.500zM.8 16.500c.3-.7 1-1 1.700-1h13.700M5.300 8.500l3.200 3 3.200-3" />
          <circle cx="8.500" cy="6" r="1" fill="currentColor" />
        </Line>
        <div className="ml-[27px] flex w-4 flex-col gap-1">
          <span className="h-px bg-[#333]" />
          <span className="h-px bg-[#333]" />
          <span className="h-px bg-[#333]" />
          <span className="h-px bg-[#333]" />
        </div>
      </div>
    </div>
  );
}

function OfflineDialog() {
  const btn = "flex h-8 w-[120px] items-center justify-center";
  return (
    <div className={`mt-[372px] ml-[710px] h-[230px] w-[500px] border border-l-[6px] border-[#fbbf35] bg-white text-[#333] shadow-[0_5px_18px_3px_rgba(0,0,0,0.6)] ${UI}`}>
      <div className="flex h-[186px] pl-[10px]">
        <svg className="mt-[11px] h-[42px] w-[45px] shrink-0" viewBox="0 0 45 42">
          <defs>
            <linearGradient id="off" x1="0" y1="0" x2="1" y2="1">
              <stop offset="0" stopColor="#ff4136" />
              <stop offset="1" stopColor="#c00a06" />
            </linearGradient>
          </defs>
          <path fill="url(#off)" d="M0 2h35.500l-2.800 3H3v27.500h2L2.500 35H0zM45 6v29H17l3-3h22V9z" />
          <path fill="url(#off)" d="M21 35h3v3.500h7V41H14v-2.500h7z" />
          <path d="M6 38L43.500.8" stroke="#e02418" strokeWidth="2.600" />
        </svg>
        <div className="ml-[13px]">
          <Fit className="mt-[12px] h-7 w-[113px] text-[19px] leading-7 text-black">Client Offline</Fit>
          <div className="mt-[19px] text-[14px] leading-5">
            <Fit className="h-5 w-[167px]">This desk is not available.</Fit>
            <Fit className="mt-5 h-5 w-[370px]">Please make sure that AnyDesk is running on the remote</Fit>
            <Fit className="h-5 w-[273px]">device and it is connected to the internet.</Fit>
          </div>
        </div>
      </div>
      <div className="flex justify-end gap-[10px] pr-[10px] text-[13.5px] leading-5 font-semibold text-white">
        <div className={`bg-[#2f973e] ${btn}`}>
          <Fit className="w-[59px]">Power on</Fit>
        </div>
        <div className={`bg-[#2f973e] ${btn}`}>
          <Fit className="w-[34px]">Retry</Fit>
        </div>
        <div className={`bg-[#ff4238] ${btn}`}>
          <Fit className="w-[42px]">Cancel</Fit>
        </div>
      </div>
    </div>
  );
}

function RightScreen() {
  return (
    <div className="flex h-[1080px] w-[1920px] shrink-0 flex-col">
      <AnyDeskTabs />
      <AnyDeskToolbar />
      <div className="flex h-[974px] bg-linear-to-b from-[#808080] from-88% to-[#626262]">
        <OfflineDialog />
      </div>
      <div className="flex h-10 items-center bg-linear-to-r from-[#dad7d6] from-93% via-[#cde5ca] via-97% to-[#d3ecd2]">
        <div className="flex h-10 w-[47px] shrink-0 items-center justify-center text-black">
          <FaWindows className="h-[17px] w-4" />
        </div>
        <Cell><Magnifier /></Cell>
        <TaskIcons />
        <div className="mr-[6px] ml-auto">
          <Clock />
        </div>
      </div>
    </div>
  );
}

export default function App() {
  return (
    <div className="flex h-[1080px] w-[3286px] overflow-hidden">
      <LeftScreen />
      <RightScreen />
    </div>
  );
}
